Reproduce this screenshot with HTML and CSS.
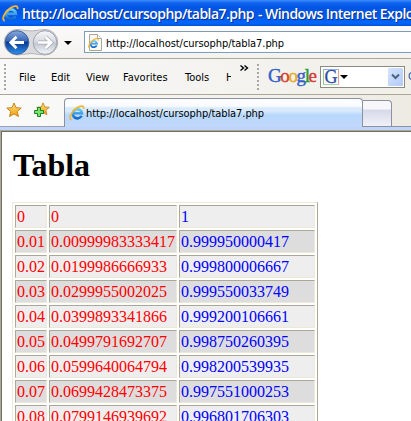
FILE: index.html
```html
<!DOCTYPE html>
<html lang="es">
<head>
<meta charset="utf-8">
<title>http://localhost/cursophp/tabla7.php</title>
<link rel="stylesheet" href="styles.css">
</head>
<body>
<svg class="defs" width="0" height="0">
  <defs>
    <linearGradient id="blue" x2="0" y2="1"><stop stop-color="#69ccfa"/><stop offset="1" stop-color="#1268cc"/></linearGradient>
    <linearGradient id="back" x2="0" y2="1"><stop stop-color="#8aa9dc"/><stop offset=".42" stop-color="#3b68b8"/><stop offset=".5" stop-color="#0b3a96"/><stop offset="1" stop-color="#2b93ee"/></linearGradient>
    <linearGradient id="fwd" x2="0" y2="1"><stop stop-color="#f7f8fa"/><stop offset=".48" stop-color="#d5d9e1"/><stop offset=".52" stop-color="#bfc5d0"/><stop offset="1" stop-color="#f4f6fa"/></linearGradient>
    <linearGradient id="gold" x2="0" y2="1"><stop stop-color="#ffe68a"/><stop offset="1" stop-color="#f79a08"/></linearGradient>
    <symbol id="ie" viewBox="0 0 16 16">
      <path d="M12.6 10.7A4.6 4.6 0 1 1 13 8.3H5" fill="none" stroke="url(#blue)" stroke-width="2.600"/>
      <path d="M2.600 15C-1 13.600 2.400 6.500 7.600 3 11.500.3 15.600.2 14.600 3.800" fill="none" stroke="#f3b632" stroke-width="1.700"/>
    </symbol>
    <symbol id="star" viewBox="0 0 16 16">
      <path d="M8 1l2 4.700 5.200.4-4 3.400 1.300 5L8 11.900l-4.500 2.600 1.300-5-4-3.400L6 5.700z" fill="url(#gold)" stroke="#c5841c" stroke-linejoin="round"/>
    </symbol>
  </defs>
</svg>
<div class="window">
  <header class="titlebar">
    <svg class="title-icon"><use href="#ie"/></svg>
    <span class="title-url">http://localhost/cursophp/tabla7.php</span><span class="title-app">- Windows Internet Explorer</span>
  </header>
  <div class="navbar">
    <svg class="nav-buttons" width="56" height="29" viewBox="0 0 56 29">
      <path d="M14 1.500Q28 4.500 42 1.500A12.500 12.500 0 0 1 42 27Q28 24 14 27A12.500 12.500 0 0 1 14 1.500z" fill="#d9dade" stroke="#b3b5ba"/>
      <circle cx="14" cy="14.500" r="11.800" fill="url(#back)" stroke="#38609f"/>
      <circle cx="42" cy="14.500" r="11.800" fill="url(#fwd)" stroke="#9da2ad"/>
      <path d="M21 14.500H8M13.500 8.800L7.800 14.500l5.700 5.700" fill="none" stroke="#fff" stroke-width="2.800"/>
      <path d="M35 14.500h13M42.500 8.800l5.700 5.700-5.700 5.700" fill="none" stroke="#a5abb5" stroke-width="4"/>
      <path d="M35 14.500h13M42.500 8.800l5.700 5.700-5.700 5.700" fill="none" stroke="#fff" stroke-width="2.600"/>
    </svg>
    <span class="arrow"></span>
    <div class="address">
      <svg class="page-icon" width="15" height="17" viewBox="0 0 15 17">
        <path d="M1.500.5h8l4 4v12h-12z" fill="#faf9f4" stroke="#aaa894"/><path d="M9.500.5v4h4" fill="#fff" stroke="#aaa894"/>
        <use href="#ie" x="0" y="4" width="11" height="11"/>
      </svg>
      <span class="address-text">http://localhost/cursophp/tabla7.php</span>
    </div>
  </div>
  <div class="menubar">
    <span class="grip"></span>
    <nav class="menu">
      <span class="file">File</span><span class="edit">Edit</span><span class="view">View</span><span class="fav">Favorites</span><span class="tools">Tools</span><span class="help">H</span>
    </nav>
    <svg class="more" width="9" height="7" viewBox="0 0 9 7"><path d="M.5.5l3 2.500-3 2.500M4.500.5l3 2.500-3 2.500" fill="none" stroke="#000" stroke-width="1.400"/></svg>
    <span class="grip second"></span>
    <span class="google"><b class="b">G</b><b class="r">o</b><b class="y">o</b><b class="b">g</b><b class="g">l</b><b class="r">e</b></span>
    <div class="search">
      <span class="g-badge">G</span><span class="arrow small"></span>
      <span class="drop"><svg width="9" height="7" viewBox="0 0 9 7"><path d="M1 1.500L4.500 5 8 1.500" fill="none" stroke="#4d6185" stroke-width="2"/></svg></span>
    </div>
    <span class="cut">G</span>
  </div>
  <div class="tabbar">
    <div class="favs">
      <svg class="star"><use href="#star"/></svg>
      <svg class="addstar" width="17" height="16" viewBox="0 0 17 16"><use href="#star" x="3" y="0" width="14" height="14"/><path d="M4.500 5.500h3v3h3v3h-3v3h-3v-3h-3v-3h3z" fill="#7be070" stroke="#16861d"/></svg>
    </div>
    <div class="tab"><svg class="tab-icon"><use href="#ie"/></svg><span class="tab-text">http://localhost/cursophp/tabla7.php</span></div>
    <div class="newtab"></div>
    <div class="rest"></div>
  </div>
  <div class="strip"></div>
  <div class="frame">
    <main class="page">
      <h1>Tabla</h1>
      <table>
        <tr><td class="c1">0</td><td class="c2">0</td><td class="c3">1</td></tr>
        <tr><td>0.01</td><td>0.00999983333417</td><td>0.999950000417</td></tr>
        <tr><td>0.02</td><td>0.0199986666933</td><td>0.999800006667</td></tr>
        <tr><td>0.03</td><td>0.0299955002025</td><td>0.999550033749</td></tr>
        <tr><td>0.04</td><td>0.0399893341866</td><td>0.999200106661</td></tr>
        <tr><td>0.05</td><td>0.0499791692707</td><td>0.998750260395</td></tr>
        <tr><td>0.06</td><td>0.0599640064794</td><td>0.998200539935</td></tr>
        <tr><td>0.07</td><td>0.0699428473375</td><td>0.997551000253</td></tr>
        <tr><td>0.08</td><td>0.0799146939692</td><td>0.996801706303</td></tr>
      </table>
    </main>
  </div>
</div>
</body>
</html>
```
FILE: styles.css
```css
* { box-sizing: border-box; }
html, body { margin: 0; height: 421px; overflow: hidden; }
body { font-family: "DejaVu Sans Condensed", "DejaVu Sans", sans-serif; font-size: 11px; color: #000; }
.defs { display: block; }
svg { flex: none; }
span, b { flex: none; white-space: nowrap; }
.window { display: flex; flex-direction: column; width: 411px; height: 421px; overflow: hidden; background: #f2f1ec; }

.titlebar { flex: none; display: flex; align-items: center; height: 26px; padding-left: 2px; overflow: hidden; background: linear-gradient(#3b8dfa 0, #1063ee 3px, #0054e3 8px, #0058e9 16px, #0066fd 23px, #0050d8 26px); color: #fff; font: 600 14px "Open Sans", sans-serif; text-shadow: 1px 1px #0b2f8c; }
.title-icon { width: 17px; height: 17px; margin-right: 3px; }
.title-url { width: 236px; letter-spacing: -.55px; }
.title-app { letter-spacing: -.55px; }

.navbar { flex: none; display: flex; align-items: center; height: 33px; padding-left: 3px; background: linear-gradient(#fbfafa, #f3f2ef); border-bottom: 1px solid #aaa698; }
.arrow { width: 0; height: 0; border: 4px solid transparent; border-top-color: #000; border-bottom: 0; }
.navbar .arrow { margin: 1px 0 0 5px; }
.address { display: flex; align-items: center; width: 340px; height: 22px; margin-left: 12px; padding-left: 3px; flex: none; border: 1px solid #7f9db9; background: #fff; }
.address-text { margin: 2px 0 0 3px; letter-spacing: -.07px; }

.menubar { flex: none; display: flex; align-items: center; height: 36px; padding-left: 4px; overflow: hidden; background: linear-gradient(90deg, #f8f8f9, #f0efe8); border-bottom: 1px solid #aaa698; }
.grip { width: 2px; height: 26px; background: repeating-linear-gradient(#aaa89c 0 2px, transparent 2px 4px); }
.menu { flex: none; display: flex; width: 212px; margin: 2px 0 0 13px; overflow: hidden; }
.file { width: 32px; } .edit { width: 35px; } .view { width: 37px; } .fav { width: 62px; } .tools { width: 41px; } .help { width: 5px; overflow: hidden; }
.more { align-self: flex-start; margin: 6px 0 0 9px; }
.grip.second { margin-left: 8px; }
.google { display: flex; width: 48px; margin: -2px 0 0 9px; font: 19px "Liberation Serif", serif; letter-spacing: -1.4px; }
.google b { font-weight: normal; -webkit-text-stroke: .4px; }
.b { color: #3260c8; } .r { color: #d83a30; } .y { color: #e6aa18; } .g { color: #259b38; }
.search { flex: none; display: flex; align-items: center; width: 85px; height: 22px; margin-left: 4px; padding: 0 1px 0 2px; border: 1px solid #8d8b80; background: #fff; }
.g-badge { width: 16px; height: 16px; border: 1px solid; border-color: #8fb1ef #ef9a95 #a5d8a0 #8bd092; color: #2e4f9f; font: 18px/14px "Liberation Serif", serif; text-align: center; -webkit-text-stroke: .3px; }
.small { margin-left: 1px; }
.drop { display: flex; align-items: center; justify-content: center; width: 15px; height: 18px; margin-left: auto; border-radius: 1px; background: linear-gradient(135deg, #d5e3fd, #b3cbf6); }
.cut { margin-left: 3px; color: #2652b0; }

.tabbar { flex: none; display: flex; align-items: flex-end; height: 32px; background: linear-gradient(90deg, #fafafa, #edebe2); }
.favs { flex: none; display: flex; align-items: center; width: 64px; height: 32px; padding: 0 0 2px 6px; border-bottom: 1px solid #9ca0aa; }
.star { width: 16px; height: 16px; }
.addstar { margin-left: 11px; }
.tab { flex: none; display: flex; align-items: center; width: 299px; height: 29px; padding: 0 0 0 4px; border: 1px solid #8c919f; border-bottom: 0; border-radius: 4px 4px 0 0; background: linear-gradient(#fafcff 0 7px, #d9eafc 9px 12px, #b7d8fc 16px, #c2d8fb); }
.tab-icon { width: 16px; height: 16px; }
.tab-text { margin-left: 1px; letter-spacing: -.07px; }
.newtab { flex: none; width: 29px; height: 27px; border: 1px solid #8c919f; border-left: 0; border-radius: 0 4px 0 0; background: linear-gradient(#f6f6fb 0 8px, #d5d9e8 9px, #f1f1f8); }
.rest { flex: 1; height: 27px; border-bottom: 1px solid #8c919f; }
.strip { flex: none; height: 3px; background: #bfd4fa; }

.frame { flex: 1; display: flex; min-height: 0; border: 1px solid #aca899; border-width: 1px 0 0 1px; }
.page { flex: 1; padding-left: 10px; border: 1px solid #716f64; border-width: 1px 0 0 1px; overflow: hidden; background: #fff; color: #000; font: 16px "Liberation Serif", serif; }
h1 { margin: 15px 0 18px; padding-left: 1px; font-size: 32px; line-height: 37px; }
table { border-collapse: separate; border-spacing: 2px; border: 1px solid; border-color: #ece9d8 #aca899 #aca899 #ece9d8; color: #f00; }
td { height: 23px; padding: 1px; border: 1px solid; border-color: #aca899 #ece9d8 #ece9d8 #aca899; background: #eee; line-height: 19px; }
tr:nth-child(even) td { background: #ddd; }
td:nth-child(3) { color: #00f; }
.c1 { width: 32px; } .c2 { width: 128px; } .c3 { width: 136px; }
```
